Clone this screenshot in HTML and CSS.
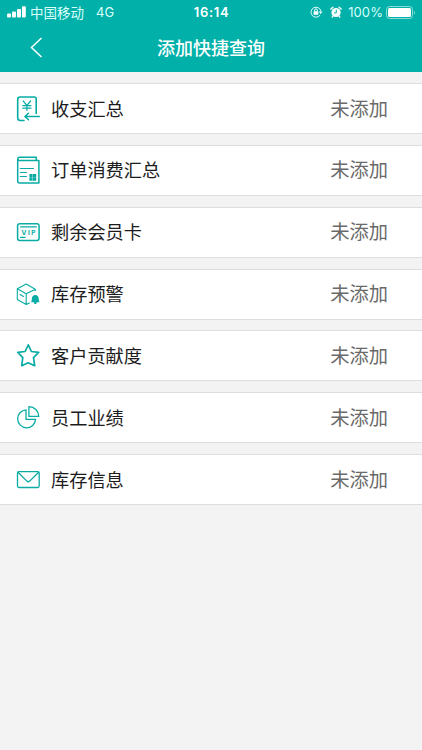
FILE: index.html
```html
<!DOCTYPE html>
<html lang="zh-CN">
<head>
<meta charset="utf-8">
<title>添加快捷查询</title>
<link rel="stylesheet" href="styles.css">
</head>
<body>
<header class="header">
  <div class="status">
    <div class="status-left">
      <svg class="signal" width="20" height="12" viewBox="0 0 20 12"><rect x="0" y="7.5" width="4" height="4" rx="1"/><rect x="5" y="5.5" width="4" height="6" rx="1"/><rect x="10" y="3" width="4" height="8.5" rx="1"/><rect x="15" y="0.3" width="3.8" height="11.2" rx="1"/></svg>
      <span class="carrier">中国移动</span>
      <span class="network">4G</span>
    </div>
    <time class="clock">16:14</time>
    <div class="status-right">
      <svg class="lock" width="14" height="12" viewBox="0 0 14 12"><path d="M10.200 9A5 5 0 1 1 10.900 5" fill="none" stroke="#e8fffc" stroke-width="1"/><path d="M8.800 5.400h3.800L10.700 8z"/><rect x="3.600" y="5.200" width="4.800" height="3.600" rx=".5"/><path d="M4.700 5.400V4.200a1.300 1.300 0 0 1 2.600 0v1.200" fill="none" stroke="#fff"/></svg>
      <svg class="alarm" width="12" height="12" viewBox="0 0 12 12"><circle cx="6" cy="6.500" r="4.600"/><path d="M.9 3 2.900 1.200M11.100 3 9.100 1.200M2.900 10.200l-.8.9M9.100 10.200l.8.900" stroke="#fff" stroke-width="1.400" stroke-linecap="round"/><path d="M6.300 3.700v3.200H4" fill="none" stroke="#00b0a9" stroke-width="1"/></svg>
      <span class="percent">100%</span>
      <svg class="battery" width="30" height="13" viewBox="0 0 30 13"><rect x=".5" y=".5" width="26" height="12" rx="3" fill="none" stroke="#8fdcd7"/><rect x="2" y="2" width="23" height="9" rx="1.500"/><path d="M28 4.200q1.500 2.300 0 4.600z" fill="#b4e8e5"/></svg>
    </div>
  </div>
  <div class="nav">
    <svg class="back" width="13" height="21" viewBox="0 0 13 21"><path d="M11.500 1 1.500 10.500l10 9.500"/></svg>
    <h1 class="title">添加快捷查询</h1>
  </div>
</header>
<main class="list">
  <div class="row">
    <svg class="icon" viewBox="14 0 30 49"><path d="M24 36.500h-3.500a2.800 2.800 0 0 1-2.800-2.800V15.500a2.500 2.500 0 0 1 2.500-2.500h14a2 2 0 0 1 2 2v14.500" stroke-width="1.600"/><path d="M23.200 17l3.700 4.400 3.700-4.400M26.900 21.400v5M22.800 21.600h8.200M22.800 24.200h8.200" stroke-width="1.200"/><path d="M39.300 32.500H25.300M28.500 29.200l-3.600 3.300 3.600 3.300" stroke-width="1.500"/></svg>
    <span class="label">收支汇总</span><span class="state">未添加</span>
  </div>
  <div class="row">
    <svg class="icon" viewBox="14 0 30 49"><path d="M17.700 13V35a2 2 0 0 0 2 2h19.200V14.600H19.500a1.600 1.600 0 0 1 0-3.400h16.800v3.400" stroke-width="1.500"/><path d="M20.300 22.500h13.200M20.300 26.500h6.200M20.300 30.500h6.200" stroke-width="1.200"/><path class="solid" d="M29.400 28h3.200v3.200h-3.200zM33 28h3.200v3.200h-3.200zM29.400 31.600h3.200v3.200h-3.200zM33 31.600h3.200v3.200h-3.200z"/></svg>
    <span class="label">订单消费汇总</span><span class="state">未添加</span>
  </div>
  <div class="row">
    <svg class="icon" viewBox="14 0 30 49"><rect x="17.600" y="15.800" width="21.500" height="16.600" rx="2.200" stroke-width="1.500"/><path d="M20.500 18.800h15.800M20.500 29.300h4.700" stroke-width="1.300"/><text x="21.500" y="26.700" class="vip" textLength="14">VIP</text></svg>
    <span class="label">剩余会员卡</span><span class="state">未添加</span>
  </div>
  <div class="row">
    <svg class="icon" viewBox="14 0 30 49"><path d="M35.300 20.500v-1.300L26.200 14 17.300 18.700v10.800l8.900 5 3.200-1.500M17.300 18.700l8.900 5.100 9.100-4.600M26.200 23.800v10.700M20 24.600l3.500 1.900" stroke-width="1.100"/><path class="solid" d="M30.800 32.200c1.200-.9.900-2.300 1.100-4 .2-1.900 1.400-3.200 3.400-3.300 2 .1 3.200 1.400 3.400 3.300.2 1.700 0 3.100 1.100 4zM34 32h2.700l-.4 2h-1.900z"/></svg>
    <span class="label">库存预警</span><span class="state">未添加</span>
  </div>
  <div class="row">
    <svg class="icon" viewBox="14 0 30 49"><path d="M28.300 13.800l3.100 6.700 7.300.9-5.200 5.200 1.200 8.100-6.500-2.900-6.500 2.900 1.100-8.100-5-5.200 7.300-.9z" stroke-width="1.700"/></svg>
    <span class="label">客户贡献度</span><span class="state">未添加</span>
  </div>
  <div class="row">
    <svg class="icon" viewBox="14 0 30 49"><path d="M26 16.800a9 9 0 1 0 9.600 9.600H26zM28.900 13.700v9.700h9.900a9.800 9.800 0 0 0-9.900-9.700z" stroke-width="1.300"/></svg>
    <span class="label">员工业绩</span><span class="state">未添加</span>
  </div>
  <div class="row">
    <svg class="icon" viewBox="14 0 30 49"><rect x="17.500" y="16.700" width="21.700" height="15.800" rx="1.500" stroke-width="1.300"/><path d="M18 17.200l8.900 8.900q1.400 1.300 2.800 0l9-8.900" stroke-width="1.300"/></svg>
    <span class="label">库存信息</span><span class="state">未添加</span>
  </div>
</main>
</body>
</html>
```
FILE: styles.css
```css
* { box-sizing: border-box; }
body {
  margin: 0;
  min-height: 750px;
  background: #f3f3f3;
  font-family: "Noto Sans CJK SC", sans-serif;
}
.header { height: 72px; background: #00b0a9; color: #fff; }
.status {
  height: 24px;
  padding: 0 6px 0 7px;
  display: grid;
  grid-template-columns: 1fr auto 1fr;
  align-items: center;
  line-height: 22px;
  font-size: 13.5px;
}
.status svg { fill: #fff; flex: none; }
.status-left, .status-right { display: flex; align-items: center; }
.status-left { padding-bottom: 1px; }
.status-right { justify-content: flex-end; }
.carrier { margin-left: 3px; color: #d9fffb; }
.network { margin-left: 12px; font-family: Inter, sans-serif; font-size: 13px; color: #d9fffb; }
.clock { font-family: Inter, sans-serif; font-weight: 600; font-size: 13px; letter-spacing: .7px; }
.lock { margin-left: 2px; }
.alarm { margin-left: 6px; }
.percent { margin: 0 3px 0 6px; font-family: Inter, sans-serif; font-size: 13px; letter-spacing: .1px; color: #d9fffb; }
.nav {
  height: 48px;
  padding-bottom: 2px;
  display: grid;
  grid-template-columns: 1fr auto 1fr;
  align-items: center;
}
.back { margin-left: 30px; fill: none; stroke: #fff; stroke-width: 1.5; }
.title { margin: 0; font-size: 18px; line-height: 26px; font-weight: 500; }
.list { padding-top: 11px; display: grid; gap: 10.850px; }
.row {
  height: 51px;
  display: flex;
  align-items: center;
  padding: 0 34px 0 14px;
  border: solid #dedede;
  border-width: 1px 0;
  background: #fff;
}
.icon {
  width: 30px;
  height: 49px;
  fill: none;
  stroke: #08aca4;
  stroke-linecap: round;
  stroke-linejoin: round;
}
.icon .solid { fill: #08aca4; stroke: none; }
.vip { font: 700 6.5px Inter, sans-serif; fill: #08aca4; stroke: none; }
.label, .state { line-height: 28px; padding-bottom: 2px; }
.label { margin-left: 7px; font-size: 18.200px; color: #1c1c1c; }
.state { margin-left: auto; font-size: 19.300px; color: #6a6a6a; }
```
